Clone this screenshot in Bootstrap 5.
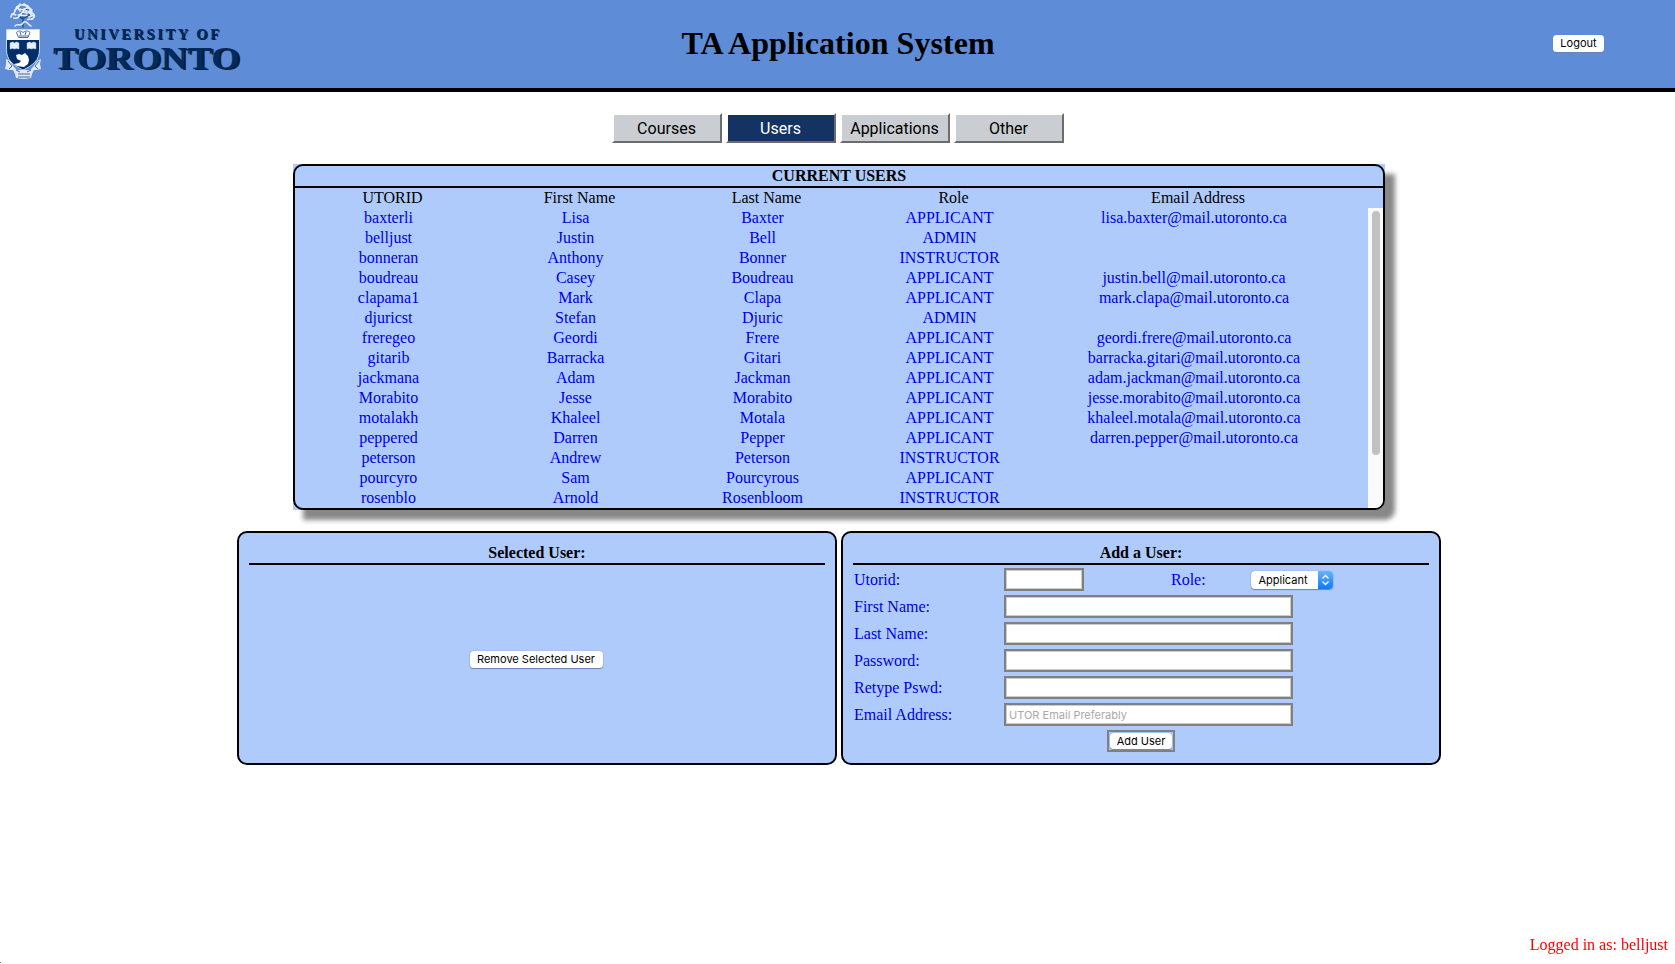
<!DOCTYPE html>
<html lang="en">
<head>
<meta charset="utf-8">
<title>TA Application System</title>
<link href="https://cdn.jsdelivr.net/npm/bootstrap@5.3.0/dist/css/bootstrap.min.css" rel="stylesheet">
<style>
body{font:16px/20px "Liberation Serif",serif;color:#000;background:#fff;height:964px;overflow:hidden}
.topbar{height:92px;background:#5e8cd7;border-bottom:4px solid #000;display:grid;grid-template-columns:1fr auto 1fr}
.topbar h1{font-size:32px;font-weight:700;line-height:36px;margin:0 0 2px 1px;letter-spacing:.04px}
.logout{margin-right:71px;margin-bottom:1px}
.tabs{gap:4px;margin-top:21px;height:30px}
.tab{width:110px;border:2px solid;border-color:#fff #6c6c6c #6c6c6c #fff;background:#cacdd1;font:16px/26px Roboto,sans-serif;padding:1px 0 0;color:#000}
.tab.current{background:#143262;color:#fff}
.users{width:1092px;height:346px;margin:21px 0 0 293px;background:#aecbfb;box-shadow:10px 10px 5px #888;border-radius:0 0 10px 0}
.frame{height:346px;border:2px solid #000;border-radius:10px;overflow:hidden}
.caption-row{height:22px;border-bottom:2px solid #000;font-weight:700;line-height:19px}
.user-row{display:grid;grid-template-columns:187px 187px 187px 187px 302px;height:20px;line-height:20px;text-align:center}
.heads{padding-left:4px}
.rows{color:#0000de;width:1073px;height:300px}
.scroller{width:15px;background:#fafafa;padding:3px 3px 0 4px}
.thumb{height:244px;width:8px;border-radius:4px;background:#c1c1c1}
.panels{gap:4px;margin:21px 0 0 237px;width:1204px}
.panel{width:600px;height:234px;border:2px solid #000;border-radius:10px;background:#aecbfb;padding:10px}
.panel-title{height:22px;border-bottom:2px solid #000;font-weight:700;font-size:16px;line-height:20px;margin:0;text-align:center}
.mac{font:11px/17px Inter,sans-serif;color:#000;background:#fff;border:0;border-radius:3.5px;box-shadow:0 0 1px #5377a8,0 1px 1px #6988b3;padding:0;height:17px;text-align:center;white-space:nowrap}
.remove{width:133px;margin-right:2px}
.field-row{height:27px;color:#0000de;padding-left:1px}
.first-row{margin-top:1px}
.field-row label{width:150px;line-height:27px}
.box{height:23px;width:289px;border:2px solid #808080;outline:0;box-shadow:inset 0 0 0 1px #ccc;background:#fff;padding:0 3px;font:11px/17px Inter,sans-serif;border-radius:0}
.box.short{width:80px}
.role-label{width:80px;margin-left:87px}
.box::placeholder{color:#a9a9a9}
.pick{width:82px;height:18px;border-radius:4px;overflow:hidden}
.pick span{flex:1;line-height:18px;padding-right:3px}
.pick i{width:15px;background:linear-gradient(#6bb3fa,#0a7aff)}
.pick svg{display:block}
.addwrap{width:68px;height:22px;border:2px solid #808080;padding:1px;margin:2px auto 0}
.login-note{color:#f00;position:fixed;right:7px;bottom:9px}
.corner-dot{position:fixed;left:0;bottom:1px;width:1px;height:1px;background:#777}
</style>
</head>
<body>
<header class="topbar align-items-center">
<svg width="260" height="88" viewBox="0 0 260 88">
<g fill="none" stroke="#e8effb" stroke-linecap="round">
<path stroke="#294f86" stroke-width="1.5" d="M23 27V15M23 19l-7-4M24 18l7-4M23 13l-4-6M24 12l5-6"/>
<path stroke-width="1.7" stroke-dasharray="2 1.500" d="M11 17c1-4 3-2 4-6s4-7 8-6 7 1 7 5 6 3 4 7-5 1-7 3M14 18c3 1 5-1 7-4s3-4 6-3 3 4 6 5M15 10c2-2 5-3 5-6M20 9c3 2 5-1 8-1M18 15c3-1 6 2 9 0M24 4l4 2M30 12l3-1M12 14l4 1M17 7l3 4M27 7l5 3M22 12l5 1M29 17l5-2"/>
<path stroke-width="1.5" stroke-dasharray="2 1" d="M15 26c3-3 5 1 8-3s5 2 8 3"/>
</g>
<path fill="#dfe8f7" d="M6 59l4 2 4 6 3 3h13l3-3 4-6 4-2-1 5 1 5-4 1-3 0-2 4-1 4-7 1-8-1-1-4-2-4-4 0-4-1 1-5z"/>
<path fill="none" stroke="#416aa3" stroke-width="1" d="M8 61l4 5-3 3M39 61l-4 5 3 3M18 74h12M18 77h12M16 70l4 2m11-2l-4 2"/>
<path fill="#002f68" stroke="#eef4fc" stroke-width=".8" d="M6.500 29.500h33v20c0 11-7 16-16.500 20.500-9.500-4.500-16.500-9.500-16.500-20.500z"/>
<path fill="#fff" d="M7 30h32v10H7z"/>
<path fill="#fff" stroke="#4d6c9a" d="M18.500 37.500l-2-5c2-2 4-2 6.500 0 3-2 5-2 7 0l-2 5zM19 36h9M20 32l1 3m5-3l-1 3"/>
<path fill="#e9effa" stroke="#a7bad6" stroke-width=".5" d="M10 43q3-2 4.500 0 2-2 4.500 0v6q-3-1-4.500 0-2-1-4.500 0zM27 43q3-2 4.500 0 2-2 4.500 0v6q-3-1-4.500 0-2-1-4.500 0z"/>
<path fill="#fff" d="M16 55l3-1 3 1 3-2 3 3 1 4-1 4-4 3-7-1-3-2 5-1 2-2-4-2z"/>
<g font-family="Liberation Serif" font-weight="700">
<g fill="#0b1a30"><text x="75" y="39.500" font-size="14.500" textLength="145" lengthAdjust="spacing">UNIVERSITY OF</text>
<text x="55" y="70" font-size="32" textLength="187" lengthAdjust="spacingAndGlyphs">TORONTO</text></g>
<g fill="#002b60" aria-hidden="true"><text x="74" y="38.500" font-size="14.500" textLength="145" lengthAdjust="spacing">UNIVERSITY OF</text>
<text x="53" y="69" font-size="32" textLength="187" lengthAdjust="spacingAndGlyphs">TORONTO</text></g>
</g>
</svg>
<h1>TA Application System</h1>
<button class="mac logout ms-auto" style="width:51px">Logout</button>
</header>
<nav class="tabs d-flex justify-content-center">
<button class="tab">Courses</button><button class="tab current">Users</button><button class="tab">Applications</button><button class="tab">Other</button>
</nav>
<section class="users"><div class="frame">
<div class="caption-row text-center">CURRENT USERS</div>
<div class="user-row heads"><span>UTORID</span><span>First Name</span><span>Last Name</span><span>Role</span><span>Email Address</span></div>
<div class="d-flex"><div class="rows">
<div class="user-row"><span>baxterli</span><span>Lisa</span><span>Baxter</span><span>APPLICANT</span><span>lisa.baxter@mail.utoronto.ca</span></div>
<div class="user-row"><span>belljust</span><span>Justin</span><span>Bell</span><span>ADMIN</span></div>
<div class="user-row"><span>bonneran</span><span>Anthony</span><span>Bonner</span><span>INSTRUCTOR</span></div>
<div class="user-row"><span>boudreau</span><span>Casey</span><span>Boudreau</span><span>APPLICANT</span><span>justin.bell@mail.utoronto.ca</span></div>
<div class="user-row"><span>clapama1</span><span>Mark</span><span>Clapa</span><span>APPLICANT</span><span>mark.clapa@mail.utoronto.ca</span></div>
<div class="user-row"><span>djuricst</span><span>Stefan</span><span>Djuric</span><span>ADMIN</span></div>
<div class="user-row"><span>freregeo</span><span>Geordi</span><span>Frere</span><span>APPLICANT</span><span>geordi.frere@mail.utoronto.ca</span></div>
<div class="user-row"><span>gitarib</span><span>Barracka</span><span>Gitari</span><span>APPLICANT</span><span>barracka.gitari@mail.utoronto.ca</span></div>
<div class="user-row"><span>jackmana</span><span>Adam</span><span>Jackman</span><span>APPLICANT</span><span>adam.jackman@mail.utoronto.ca</span></div>
<div class="user-row"><span>Morabito</span><span>Jesse</span><span>Morabito</span><span>APPLICANT</span><span>jesse.morabito@mail.utoronto.ca</span></div>
<div class="user-row"><span>motalakh</span><span>Khaleel</span><span>Motala</span><span>APPLICANT</span><span>khaleel.motala@mail.utoronto.ca</span></div>
<div class="user-row"><span>peppered</span><span>Darren</span><span>Pepper</span><span>APPLICANT</span><span>darren.pepper@mail.utoronto.ca</span></div>
<div class="user-row"><span>peterson</span><span>Andrew</span><span>Peterson</span><span>INSTRUCTOR</span></div>
<div class="user-row"><span>pourcyro</span><span>Sam</span><span>Pourcyrous</span><span>APPLICANT</span></div>
<div class="user-row"><span>rosenblo</span><span>Arnold</span><span>Rosenbloom</span><span>INSTRUCTOR</span></div>
</div><div class="scroller"><div class="thumb"></div></div></div>
</div></section>
<main class="panels d-flex">
<section class="panel d-flex flex-column"><h2 class="panel-title">Selected User:</h2>
<div class="flex-grow-1 d-flex align-items-center justify-content-center"><button class="mac remove">Remove Selected User</button></div></section>
<section class="panel"><h2 class="panel-title">Add a User:</h2>
<div class="field-row first-row d-flex align-items-center"><label>Utorid:</label><input class="box short"><span class="role-label">Role:</span><div class="mac pick d-flex"><span>Applicant</span><i><svg width="15" height="18" fill="none" stroke="#fff" stroke-width="1.3"><path d="M4.500 7.500l3-3 3 3M4.500 10.500l3 3 3-3"/></svg></i></div></div>
<div class="field-row d-flex align-items-center"><label>First Name:</label><input class="box"></div>
<div class="field-row d-flex align-items-center"><label>Last Name:</label><input class="box"></div>
<div class="field-row d-flex align-items-center"><label>Password:</label><input class="box" type="password"></div>
<div class="field-row d-flex align-items-center"><label>Retype Pswd:</label><input class="box" type="password"></div>
<div class="field-row d-flex align-items-center"><label>Email Address:</label><input class="box" placeholder="UTOR Email Preferably"></div>
<div class="addwrap d-flex"><button class="mac w-100 h-100">Add User</button></div>
</section>
</main>
<div class="login-note">Logged in as: belljust</div>
<div class="corner-dot"></div>
</body>
</html>
